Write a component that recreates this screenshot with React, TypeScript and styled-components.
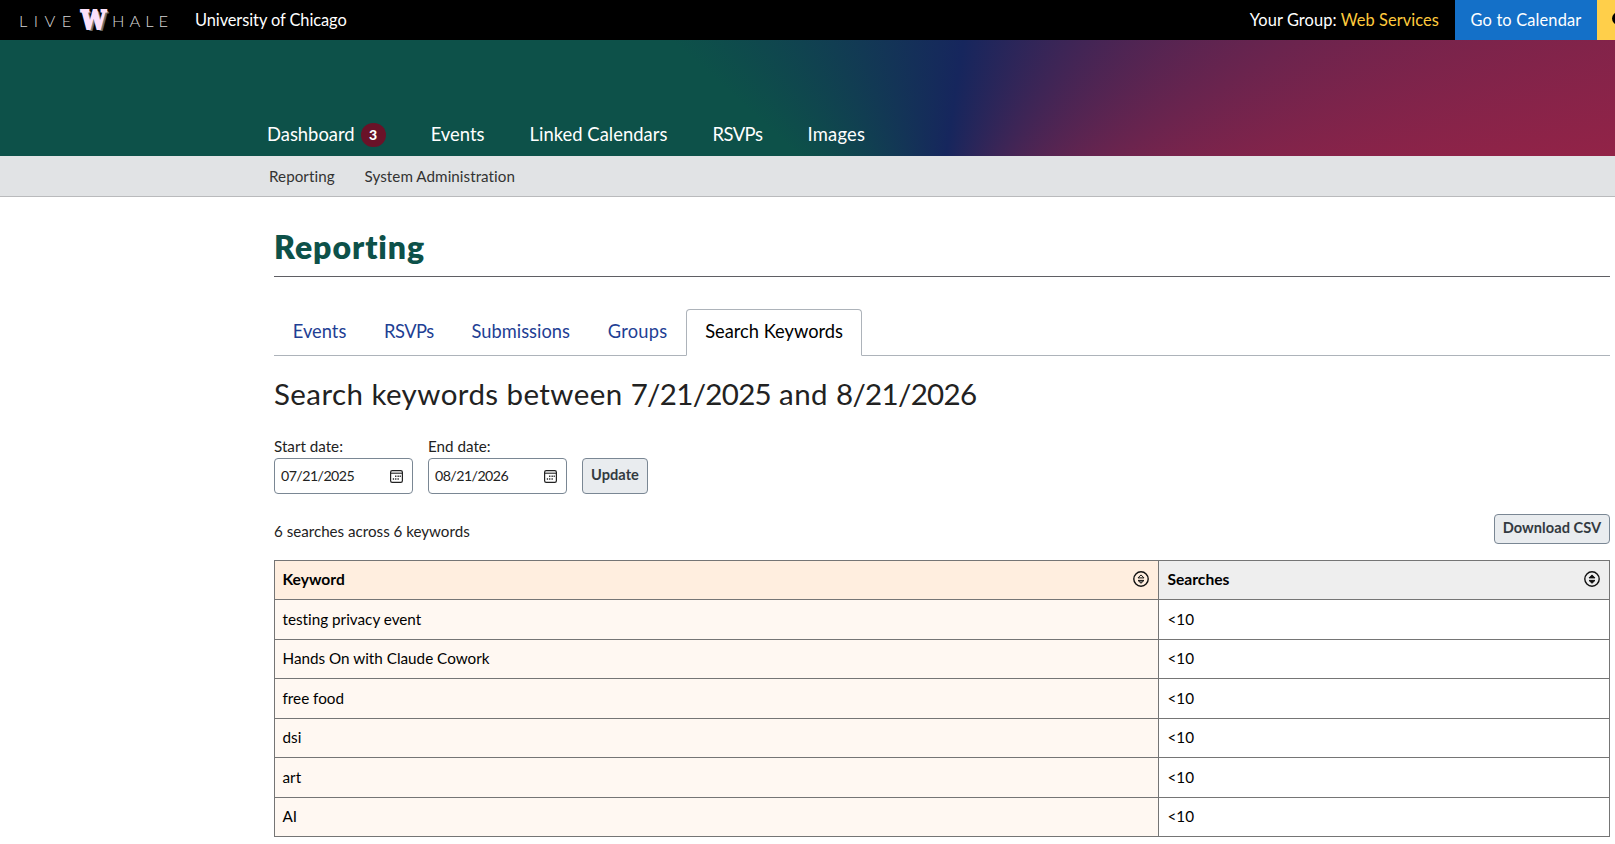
import React from 'react';
import styled, { createGlobalStyle } from 'styled-components';

const Global = createGlobalStyle`
  *, *::before, *::after { box-sizing: border-box; }
  html, body { margin: 0; background: #fff; overflow: hidden; }
  body {
    font-family: Lato, "Open Sans", sans-serif;
    font-variant-ligatures: none;
    color: #222;
  }
  h1, h2, p { margin: 0; }
  a { color: inherit; text-decoration: none; }
`;

const Page = styled.div`
  width: 100%;
  height: 844px;
  overflow: hidden;
`;

const TopBar = styled.header`
  display: flex;
  height: 40px;
  padding-left: 19px;
  background: #000;
  color: #fff;
  font-size: 16.4px;
  line-height: 39px;
  white-space: nowrap;
  overflow: hidden;
`;

const Logo = styled.a`
  display: flex;
  width: 176px;
  flex: none;
  font-size: 16.5px;
  line-height: 42px;
  font-weight: 400;
  color: #d4d4d4;
`;

const LogoWord = styled.span<{ $width: number; $spacing: number }>`
  width: ${p => p.$width}px;
  font-weight: 300;
  letter-spacing: ${p => p.$spacing}px;
`;

const LogoMark = styled.span`
  width: 31.5px;
  font-family: "DejaVu Serif", serif;
  font-size: 26px;
  line-height: 41px;
  font-weight: 700;
  color: #fbe0fa;
  -webkit-text-stroke: 1.8px #fbe0fa;
  text-shadow: 1px 1px 0 #777, 2px 1px 0 #777, 3px 2px 0 #666;
  span {
    display: inline-block;
    transform: scaleX(0.86);
    transform-origin: left;
  }
`;

const SiteName = styled.a`
  letter-spacing: -0.08px;
`;

const GroupInfo = styled.div`
  margin-left: auto;
  padding-right: 16px;
  letter-spacing: 0.08px;
  a { color: #ffcb3d; }
`;

const CalendarLink = styled.a`
  flex: none;
  width: 142px;
  text-align: center;
  letter-spacing: 0.15px;
  background: #1470c8;
`;

const HelpLink = styled.a`
  display: flex;
  flex: none;
  width: 18px;
  padding: 12px 0 0 15px;
  background: #ffcf4a;
  overflow: hidden;
  svg { flex: none; }
`;

const Banner = styled.div`
  display: flex;
  align-items: flex-end;
  height: 116px;
  padding: 0 0 10px 267px;
  background: conic-gradient(
    from -48deg at 57.5% 200%,
    #0d5149 0deg,
    #16265d 56.5deg,
    #932347 129deg,
    #932347 180deg,
    #0d5149 224deg
  );
`;

const MainNav = styled.nav`
  display: flex;
  gap: 45px;
  color: #fff;
  font-size: 18.4px;
  line-height: 24px;
`;

const NavItem = styled.a<{ $spacing?: number }>`
  display: flex;
  letter-spacing: ${p => p.$spacing ?? 0}px;
`;

const Badge = styled.span`
  width: 25px;
  height: 24px;
  margin: 1px 0 -1px 6px;
  border-radius: 12px;
  background: #6a1228;
  font-size: 14px;
  font-weight: 900;
  text-align: center;
`;

const SubNav = styled.nav`
  display: flex;
  gap: 30px;
  height: 41px;
  padding-left: 269px;
  border-bottom: 1px solid #b9babc;
  background: #e1e3e5;
  color: #333;
  font-size: 15.2px;
  line-height: 41px;
  letter-spacing: 0.05px;
`;

const Main = styled.main`
  padding: 30px 5px 0 274px;
`;

const Title = styled.h1`
  padding-bottom: 9px;
  border-bottom: 1px solid #5f5f64;
  color: #0d5149;
  font-size: 32px;
  line-height: 40px;
  font-weight: 800;
  letter-spacing: 0.95px;
`;

const Tabs = styled.div`
  display: flex;
  margin-top: 32px;
  border-bottom: 1px solid #adb3ba;
`;

const Tab = styled.a<{ $active?: boolean; $spacing?: number }>`
  height: 47px;
  margin-bottom: -1px;
  padding: 0 18px 0 17.8px;
  border: 1px solid ${p => (p.$active ? '#adb3ba' : 'transparent')};
  border-bottom: ${p => (p.$active ? '1px solid #fff' : '0')};
  border-radius: 4px 4px 0 0;
  color: ${p => (p.$active ? '#000' : '#1f3f94')};
  font-size: 18.3px;
  line-height: 43px;
  letter-spacing: ${p => p.$spacing ?? 0}px;
`;

const Heading = styled.h2`
  margin-top: 20px;
  font-size: 29.5px;
  line-height: 36px;
  font-weight: 400;
  letter-spacing: 0.43px;
  time { letter-spacing: -0.67px; }
`;

const Filters = styled.form`
  display: flex;
  align-items: flex-end;
  gap: 15px;
  margin-top: 24px;
`;

const Field = styled.label`
  display: flex;
  flex-direction: column;
  gap: 2px;
  font-size: 15.2px;
  line-height: 20px;
`;

const DateBox = styled.span`
  display: flex;
  align-items: center;
  justify-content: space-between;
  width: 139px;
  height: 36px;
  padding: 0 9px 0 6px;
  border: 1px solid #7a8794;
  border-radius: 4px;
  background: #fff;
  font-size: 14.2px;
  letter-spacing: -0.55px;
`;

const Button = styled.button<{ $width: number; $height: number; $line: number }>`
  display: block;
  flex: none;
  width: ${p => p.$width}px;
  height: ${p => p.$height}px;
  padding: 0 0 ${p => p.$height - 2 - p.$line}px;
  border: 1px solid #7a8794;
  border-radius: 4px;
  background: #e9ecef;
  color: #333a41;
  font-family: inherit;
  font-size: 14.6px;
  line-height: ${p => p.$line}px;
  font-weight: 700;
  letter-spacing: 0.05px;
  white-space: nowrap;
`;

const Summary = styled.div`
  display: flex;
  align-items: flex-end;
  justify-content: space-between;
  margin-top: 20px;
  p {
    padding-bottom: 3px;
    font-size: 15.15px;
    line-height: 20px;
  }
`;

const Table = styled.div`
  margin-top: 16px;
  border: 1px solid #757575;
  border-bottom: 0;
  color: #000;
`;

const Row = styled.div`
  display: grid;
  grid-template-columns: 883px 1fr;
  height: 40px;
  border-bottom: 1px solid #757575;
  &:nth-child(odd) { height: 39px; }
`;

const Cell = styled.div<{ $tint?: string; $head?: boolean }>`
  display: flex;
  align-items: center;
  justify-content: space-between;
  padding: 0 9px 2px 7.5px;
  background: ${p => p.$tint ?? '#fff'};
  font-weight: ${p => (p.$head ? 700 : 400)};
  font-size: ${p => (p.$head ? 15.6 : 15.25)}px;
  & + & {
    padding-left: 8.5px;
    border-left: 1px solid #757575;
  }
`;

const CalendarIcon = () => (
  <svg width="13" height="13" viewBox="0 0 13 13" fill="none">
    <rect x="0.6" y="0.6" width="11.8" height="11.8" rx="1.6" stroke="#222" strokeWidth="1.2" />
    <path d="M1 3.2H12" stroke="#222" strokeWidth="1.1" />
    <path d="M5.1 6.3h1.3M7.5 6.3h1.3M9.6 6.3h1.2M2.8 9h1.3M5.1 9h1.3M7.5 9h1.3" stroke="#222" strokeWidth="1.4" />
  </svg>
);

const SortIcon = ({ filled }: { filled?: boolean }) => (
  <svg width="16" height="16" viewBox="0 0 16 16" fill="none" stroke="#111">
    <circle cx="8" cy="8" r="7.2" strokeWidth="1.4" />
    <path d="M5 6.9L8 3.9l3 3z" strokeWidth="1" fill={filled ? '#111' : 'none'} />
    <path d="M5 9.4h6L8 12.3z" strokeWidth="1" fill={filled ? '#111' : '#777'} />
  </svg>
);

const HelpIcon = () => (
  <svg width="13" height="13" viewBox="0 0 13 13">
    <circle cx="6.5" cy="6.5" r="6.5" fill="#000" />
  </svg>
);

const keywords = ['testing privacy event', 'Hands On with Claude Cowork', 'free food', 'dsi', 'art', 'AI'];

export default function App() {
  return (
    <Page>
      <Global />
      <TopBar>
        <Logo>
          <LogoWord $width={61.5} $spacing={6.4}>LIVE</LogoWord>
          <LogoMark><span>W</span></LogoMark>
          <LogoWord $width={64} $spacing={5}>HALE</LogoWord>
        </Logo>
        <SiteName>University of Chicago</SiteName>
        <GroupInfo>Your Group: <a>Web Services</a></GroupInfo>
        <CalendarLink>Go to Calendar</CalendarLink>
        <HelpLink><HelpIcon /></HelpLink>
      </TopBar>
      <Banner>
        <MainNav>
          <NavItem>Dashboard<Badge>3</Badge></NavItem>
          <NavItem>Events</NavItem>
          <NavItem $spacing={0.03}>Linked Calendars</NavItem>
          <NavItem $spacing={-0.5}>RSVPs</NavItem>
          <NavItem $spacing={0.25}>Images</NavItem>
        </MainNav>
      </Banner>
      <SubNav>
        <a>Reporting</a>
        <a>System Administration</a>
      </SubNav>
      <Main>
        <Title>Reporting</Title>
        <Tabs>
          <Tab>Events</Tab>
          <Tab $spacing={-0.5}>RSVPs</Tab>
          <Tab>Submissions</Tab>
          <Tab $spacing={0.25}>Groups</Tab>
          <Tab $active>Search Keywords</Tab>
        </Tabs>
        <Heading>
          Search keywords between <time>7/21/2025</time> and <time>8/21/2026</time>
        </Heading>
        <Filters>
          <Field>
            Start date:
            <DateBox>07/21/2025<CalendarIcon /></DateBox>
          </Field>
          <Field>
            End date:
            <DateBox>08/21/2026<CalendarIcon /></DateBox>
          </Field>
          <Button type="button" $width={66} $height={36} $line={32}>Update</Button>
        </Filters>
        <Summary>
          <p>6 searches across 6 keywords</p>
          <Button type="button" $width={116} $height={30} $line={26}>Download CSV</Button>
        </Summary>
        <Table>
          <Row>
            <Cell $head $tint="#ffeedf">Keyword<SortIcon /></Cell>
            <Cell $head $tint="#eee">Searches<SortIcon filled /></Cell>
          </Row>
          {keywords.map(k => (
            <Row key={k}>
              <Cell $tint="#fff8f2">{k}</Cell>
              <Cell>&lt;10</Cell>
            </Row>
          ))}
        </Table>
      </Main>
    </Page>
  );
}
